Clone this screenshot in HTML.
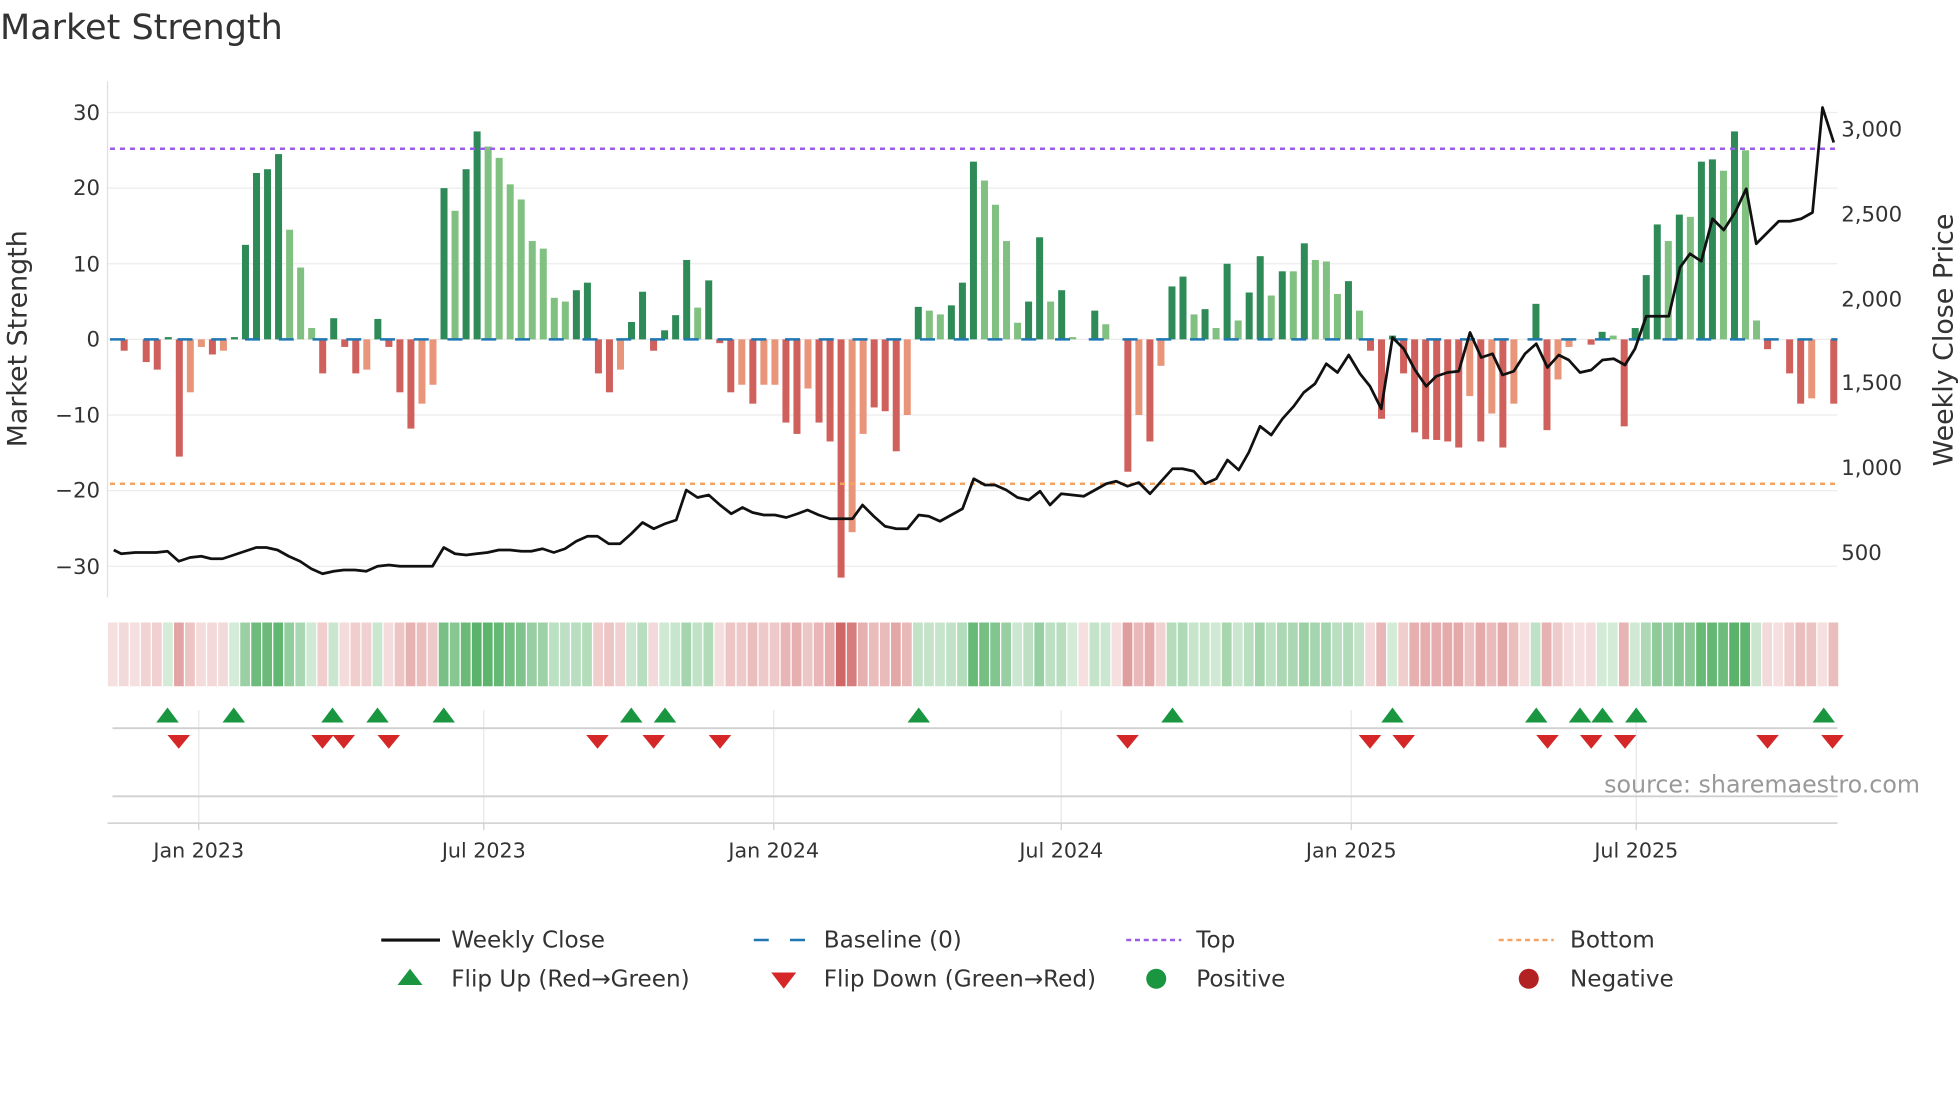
<!DOCTYPE html>
<html><head><meta charset="utf-8"><style>
html,body{margin:0;padding:0;background:#fff;}
svg{display:block;font-family:"DejaVu Sans","Liberation Sans",sans-serif;}
</style></head><body>
<svg id="s" width="1960" height="1102" viewBox="0 0 1568 881.6" preserveAspectRatio="none" xmlns="http://www.w3.org/2000/svg">
<text x="0" y="31" font-size="28" fill="#333">Market Strength</text>
<g id="grid" stroke="#ececec" stroke-width="1">
<line x1="86" x2="1470" y1="90" y2="90"/><line x1="86" x2="1470" y1="150.5" y2="150.5"/><line x1="86" x2="1470" y1="211" y2="211"/><line x1="86" x2="1470" y1="271.5" y2="271.5"/><line x1="86" x2="1470" y1="332" y2="332"/><line x1="86" x2="1470" y1="392.5" y2="392.5"/><line x1="86" x2="1470" y1="453" y2="453"/>
</g>
<line x1="86" x2="86" y1="65" y2="478" stroke="#e0e0e0"/>
<g font-size="17" fill="#333" text-anchor="end">
<text x="80" y="96">30</text><text x="80" y="156">20</text><text x="80" y="217">10</text><text x="80" y="277">0</text><text x="80" y="338">−10</text><text x="80" y="398">−20</text><text x="80" y="459">−30</text>
</g>
<g font-size="17" fill="#333">
<text x="1473" y="109">3,000</text><text x="1473" y="177">2,500</text><text x="1473" y="245">2,000</text><text x="1473" y="312">1,500</text><text x="1473" y="380">1,000</text><text x="1473" y="448">500</text>
</g>
<text transform="translate(21,271) rotate(-90)" font-size="21.5" fill="#333" text-anchor="middle">Market Strength</text>
<text transform="translate(1562,272) rotate(-90)" font-size="21.5" fill="#333" text-anchor="middle">Weekly Close Price</text>
<g id="bars"></g>
<line x1="88" x2="1470" y1="271.5" y2="271.5" stroke="#1f77b4" stroke-width="2" stroke-dasharray="12,15"/>
<line x1="88" x2="1470" y1="119" y2="119" stroke="#9b5de5" stroke-width="2" stroke-dasharray="4,4"/>
<line x1="88" x2="1470" y1="387" y2="387" stroke="#f4a460" stroke-width="2" stroke-dasharray="4,4"/>
<polyline id="price" fill="none" stroke="#111" stroke-width="2.2" stroke-linejoin="round"/>
<g id="heat"></g>
<g stroke="#e8e8e8"><line x1="159" x2="159" y1="568" y2="658"/><line x1="387" x2="387" y1="568" y2="658"/><line x1="619" x2="619" y1="568" y2="658"/><line x1="849" x2="849" y1="568" y2="658"/><line x1="1081" x2="1081" y1="568" y2="658"/><line x1="1309" x2="1309" y1="568" y2="658"/></g>
<line x1="90" x2="1470" y1="582.5" y2="582.5" stroke="#d0d0d0" stroke-width="1.5"/>
<line x1="90" x2="1470" y1="637" y2="637" stroke="#d0d0d0" stroke-width="1.5"/>
<line x1="86" x2="1470" y1="658.5" y2="658.5" stroke="#cfcfcf" stroke-width="1.2"/>
<g stroke="#cfcfcf"><line x1="159" x2="159" y1="658" y2="664"/><line x1="387" x2="387" y1="658" y2="664"/><line x1="619" x2="619" y1="658" y2="664"/><line x1="849" x2="849" y1="658" y2="664"/><line x1="1081" x2="1081" y1="658" y2="664"/><line x1="1309" x2="1309" y1="658" y2="664"/></g>
<g id="mk"></g>
<text x="1536" y="634" font-size="19" fill="#999" text-anchor="end">source: sharemaestro.com</text>
<g font-size="16.5" fill="#333" text-anchor="middle">
<text x="159" y="686">Jan 2023</text><text x="387" y="686">Jul 2023</text><text x="619" y="686">Jan 2024</text><text x="849" y="686">Jul 2024</text><text x="1081" y="686">Jan 2025</text><text x="1309" y="686">Jul 2025</text>
</g>
<g font-size="18.5" fill="#333">
<line x1="305" x2="352" y1="752" y2="752" stroke="#111" stroke-width="2.5"/><text x="361" y="758">Weekly Close</text>
<line x1="603" x2="647" y1="752" y2="752" stroke="#1f77b4" stroke-width="2" stroke-dasharray="12,17"/><text x="659" y="758">Baseline (0)</text>
<line x1="901" x2="945" y1="752" y2="752" stroke="#9b5de5" stroke-width="2" stroke-dasharray="4,3"/><text x="957" y="758">Top</text>
<line x1="1199" x2="1243" y1="752" y2="752" stroke="#f4a460" stroke-width="2" stroke-dasharray="4,3"/><text x="1256" y="758">Bottom</text>
<polygon points="318,788 338,788 328,775" fill="#1a9641"/><text x="361" y="789">Flip Up (Red→Green)</text>
<polygon points="617,778 637,778 627,791" fill="#d62728"/><text x="659" y="789">Flip Down (Green→Red)</text>
<circle cx="925" cy="783" r="8" fill="#1a9641"/><text x="957" y="789">Positive</text>
<circle cx="1223" cy="783" r="8" fill="#b22222"/><text x="1256" y="789">Negative</text>
</g>
</svg>
<script>
var v=[[0,'l'],[-1.5,'d'],[0,'l'],[-3,'d'],[-4,'d'],[0.3,'d'],[-15.5,'d'],[-7,'l'],[-1,'l'],[-2,'d'],[-1.5,'l'],[0.3,'d'],[12.5,'d'],[22,'d'],[22.5,'d'],[24.5,'d'],[14.5,'l'],[9.5,'l'],[1.5,'l'],[-4.5,'d'],[2.8,'d'],[-1,'d'],[-4.5,'d'],[-4,'l'],[2.7,'d'],[-1,'d'],[-7,'d'],[-11.8,'d'],[-8.5,'l'],[-6,'l'],[20,'d'],[17,'l'],[22.5,'d'],[27.5,'d'],[25.5,'l'],[24,'l'],[20.5,'l'],[18.5,'l'],[13,'l'],[12,'l'],[5.5,'l'],[5,'l'],[6.5,'d'],[7.5,'d'],[-4.5,'d'],[-7,'d'],[-4,'l'],[2.3,'d'],[6.3,'d'],[-1.5,'d'],[1.2,'d'],[3.2,'d'],[10.5,'d'],[4.2,'l'],[7.8,'d'],[-0.5,'d'],[-7,'d'],[-6,'l'],[-8.5,'d'],[-6,'l'],[-6,'l'],[-11,'d'],[-12.5,'d'],[-6.5,'l'],[-11,'d'],[-13.5,'d'],[-31.5,'d'],[-25.5,'l'],[-12.5,'l'],[-9,'d'],[-9.5,'d'],[-14.8,'d'],[-10,'l'],[4.3,'d'],[3.8,'l'],[3.3,'l'],[4.5,'d'],[7.5,'d'],[23.5,'d'],[21,'l'],[17.8,'l'],[13,'l'],[2.2,'l'],[5,'d'],[13.5,'d'],[5,'l'],[6.5,'d'],[0.3,'l'],[0,'l'],[3.8,'d'],[2,'l'],[0,'l'],[-17.5,'d'],[-10,'l'],[-13.5,'d'],[-3.5,'l'],[7,'d'],[8.3,'d'],[3.3,'l'],[4,'d'],[1.5,'l'],[10,'d'],[2.5,'l'],[6.2,'d'],[11,'d'],[5.8,'l'],[9,'d'],[9,'l'],[12.7,'d'],[10.5,'l'],[10.3,'l'],[6,'l'],[7.7,'d'],[3.8,'l'],[-1.5,'d'],[-10.5,'d'],[0.5,'d'],[-4.5,'d'],[-12.3,'d'],[-13.2,'d'],[-13.3,'d'],[-13.5,'d'],[-14.3,'d'],[-7.5,'l'],[-13.5,'d'],[-9.8,'l'],[-14.3,'d'],[-8.5,'l'],[0,'l'],[4.7,'d'],[-12,'d'],[-5.3,'l'],[-1,'l'],[0,'l'],[-0.7,'d'],[1,'d'],[0.5,'l'],[-11.5,'d'],[1.5,'d'],[8.5,'d'],[15.2,'d'],[13,'l'],[16.5,'d'],[16.2,'l'],[23.5,'d'],[23.8,'d'],[22.3,'l'],[27.5,'d'],[25,'l'],[2.5,'l'],[-1.3,'d'],[0,'l'],[-4.5,'d'],[-8.5,'d'],[-7.8,'l'],[0,'l'],[-8.5,'d']];
var NS="http://www.w3.org/2000/svg";
function el(p,t,a){var e=document.createElementNS(NS,t);for(var k in a)e.setAttribute(k,a[k]);p.appendChild(e);return e;}
var bars=document.getElementById('bars'),heat=document.getElementById('heat');
var step=(1467-90.5)/(v.length-1);
v.forEach(function(d,i){
 var x=90.5+i*step,val=d[0],y0=271.5,h=Math.abs(val)*6.05;
 var col;
 if(val>=0)col=d[1]=='d'?'#2e8b57':'#80c080';else col=d[1]=='d'?'#d0605c':'#e8957a';
 if(h>0.3)el(bars,'rect',{x:x-2.8,width:5.6,y:val>=0?y0-h:y0,height:h,fill:col});
 var m=Math.min(Math.abs(val)/32,1);
 var hc;
 if(val>0.2){var a=0.2+0.6*Math.min(Math.abs(val)/26,1);hc='rgba(50,160,70,'+a.toFixed(2)+')';}
 else{var a=0.18+0.7*m;hc='rgba(200,80,80,'+a.toFixed(2)+')';}
 el(heat,'rect',{x:x-4.2,width:7.8,y:498,height:51,fill:hc});
});
var p=[[91,440],[97,443],[108,442],[125,442],[134,441],[143,449],[152,446],[161,445],[169,447],[178,447],[187,444],[196,441],[205,438],[213,438],[222,440],[231,445],[240,449],[249,455],[258,459],[267,457],[275,456],[284,456],[293,457],[302,453],[311,452],[320,453],[329,453],[337,453],[346,453],[355,438],[364,443],[373,444],[381,443],[390,442],[399,440],[408,440],[417,441],[425,441],[434,439],[443,442],[452,439],[461,433],[470,429],[478,429],[487,435],[496,435],[505,427],[514,418],[523,423],[532,419],[541,416],[549,392],[558,398],[567,396],[576,404],[585,411],[594,406],[602,410],[611,412],[620,412],[629,414],[638,411],[646,408],[655,412],[664,415],[673,415],[682,415],[690,404],[699,413],[708,421],[717,423],[726,423],[735,412],[743,413],[752,417],[761,412],[770,407],[779,383],[788,388],[796,388],[805,392],[814,398],[823,400],[832,393],[840,404],[849,395],[858,396],[867,397],[876,392],[885,387],[893,385],[902,389],[911,386],[920,395],[929,385],[938,375],[946,375],[955,377],[964,387],[973,383],[982,368],[991,376],[999,362],[1008,341],[1017,348],[1026,335],[1035,325],[1043,314],[1052,307],[1061,291],[1070,298],[1079,284],[1088,299],[1096,309],[1105,327],[1114,270],[1123,279],[1132,296],[1141,309],[1149,301],[1158,298],[1167,297],[1176,266],[1185,286],[1194,283],[1202,300],[1211,297],[1220,283],[1229,275],[1238,294],[1247,284],[1255,288],[1264,298],[1273,296],[1282,288],[1291,287],[1300,292],[1308,279],[1317,253],[1326,253],[1335,253],[1344,214],[1352,203],[1361,209],[1370,175],[1379,184],[1388,170],[1397,151],[1405,195],[1414,186],[1423,177],[1432,177],[1441,175],[1450,170],[1458,86],[1467,114]];
document.getElementById('price').setAttribute('points',p.map(function(q){return q.join(',')}).join(' '));
var mk=document.getElementById('mk');
[134,187,266,302,355,505,532,735,938,1114,1229,1264,1282,1309,1459].forEach(function(x){el(mk,'polygon',{points:(x-9)+',578 '+(x+9)+',578 '+x+',566',fill:'#1a9641'});});
[143,258,275,311,478,523,576,902,1096,1123,1238,1273,1300,1414,1466].forEach(function(x){el(mk,'polygon',{points:(x-9)+',588 '+(x+9)+',588 '+x+',599',fill:'#d62728'});});
</script>
</body></html>
